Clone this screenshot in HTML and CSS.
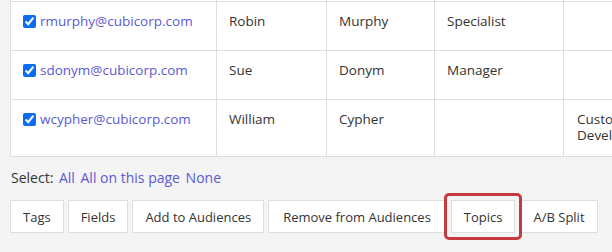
FILE: index.html
```html
<!DOCTYPE html>
<html lang="en">
  <head>
    <meta charset="UTF-8" />
    <meta name="viewport" content="width=device-width, initial-scale=1.0" />
    <title>Contacts</title>
    <link rel="stylesheet" href="styles.css">
  </head>
  <body>
    <div class="page">
      <div class="grid-wrap">
        <table class="contacts">
          <colgroup>
            <col class="c-email" />
            <col class="c-first" />
            <col class="c-last" />
            <col class="c-title" />
            <col class="c-dept" />
          </colgroup>
          <tbody>
            <!-- previous row, scrolled out of view -->
            <tr class="cut">
              <td></td><td></td><td></td><td></td><td></td>
            </tr>
            <tr>
              <td><label class="email"><input type="checkbox" checked /><a href="#">rmurphy@cubicorp.com</a></label></td>
              <td>Robin</td>
              <td>Murphy</td>
              <td>Specialist</td>
              <td></td>
            </tr>
            <tr>
              <td><label class="email"><input type="checkbox" checked /><a href="#">sdonym@cubicorp.com</a></label></td>
              <td>Sue</td>
              <td>Donym</td>
              <td>Manager</td>
              <td></td>
            </tr>
            <tr>
              <td><label class="email"><input type="checkbox" checked /><a href="#">wcypher@cubicorp.com</a></label></td>
              <td>William</td>
              <td>Cypher</td>
              <td></td>
              <td>Customer Development</td>
            </tr>
          </tbody>
        </table>
      </div>

      <div class="select-bar">
        Select: <a href="#">All</a> <a href="#">All on this page</a> <a href="#">None</a>
      </div>

      <div class="actions">
        <button>Tags</button>
        <button>Fields</button>
        <button>Add to Audiences</button>
        <button class="wide">Remove from Audiences</button>
        <span class="highlight"><button>Topics</button></span>
        <button>A/B Split</button>
      </div>
    </div>
  </body>
</html>
```

FILE: styles.css
```css
html, body {
  height: 100%;
}
body {
  margin: 0;
  background-color: #f4f4f4;
  font-family: "Open Sans", Arial, sans-serif;
  font-size: 13.5px;
  color: #333;
}
a {
  color: #5b59d6;
  text-decoration: none;
}
.page {
  padding: 0 0 18px 10px;
}
.grid-wrap {
  overflow: hidden;
}
.contacts {
  border-collapse: collapse;
  table-layout: fixed;
  width: 700px;
  background: white;
}
.c-email { width: 206px; }
.c-first { width: 110px; }
.c-last { width: 108px; }
.c-title { width: 129px; }
.c-dept { width: 147px; }
.contacts td {
  border: 1px solid #dedede;
  border-top: none;
  vertical-align: top;
  padding: 11px 12px 13px 12px;
  height: 24px;
  line-height: 16px;
}
.contacts tr + tr td {
  border-top: 1px solid #dedede;
}
.contacts td:last-child {
  padding-left: 13px;
}
.contacts tr.cut td {
  height: 1px;
  padding: 0;
  line-height: 1px;
  font-size: 1px;
}
.email {
  display: flex;
  align-items: center;
  gap: 4px;
}
.email input {
  margin: 0;
  width: 13px;
  height: 13px;
  accent-color: #0a6cf5;
}
.select-bar {
  margin-top: 12px;
  font-size: 14px;
  line-height: 18px;
  padding-left: 1px;
}
.select-bar a {
  margin-left: 2px;
}
.actions {
  margin-top: 13px;
  display: flex;
  align-items: flex-start;
  gap: 4px;
}
.actions button {
  font-family: inherit;
  font-size: 13px;
  color: #333;
  background: white;
  border: 1px solid #dedede;
  height: 33px;
  padding: 0 12px;
}
.actions button.wide {
  padding: 0 14px;
}
.highlight {
  position: relative;
  display: flex;
  height: 33px;
  margin: 0 1px 0 1px;
}
.highlight::after {
  content: "";
  position: absolute;
  top: -7px;
  bottom: -7px;
  left: -7px;
  right: -7px;
  border: 3px solid #c43a3e;
  border-radius: 5px;
}
```
